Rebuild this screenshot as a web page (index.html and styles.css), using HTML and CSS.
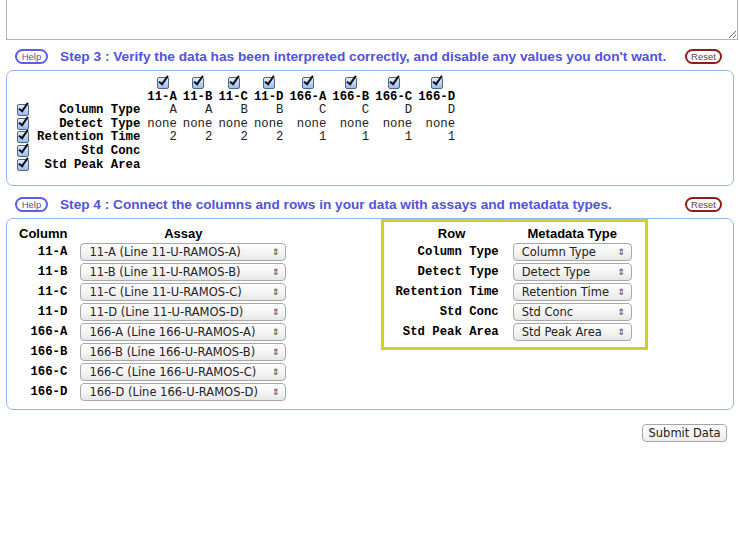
FILE: index.html
```
<!DOCTYPE html>
<html>
<head>
<meta charset="utf-8">
<link rel="stylesheet" href="styles.css">
</head>
<body>
<div class="page">
  <textarea class="paste"></textarea>

  <div class="stephead first">
    <span class="help">Help</span>
    <span class="title">Step 3 : Verify the data has been interpreted correctly, and disable any values you don't want.</span>
    <span class="reset">Reset</span>
  </div>
  <div class="panel p3">
    <table class="grid">
      <tr class="cbrow">
        <td></td><td></td>
        <td class="c"><span class="cb"></span></td>
        <td class="c"><span class="cb"></span></td>
        <td class="c"><span class="cb"></span></td>
        <td class="c"><span class="cb"></span></td>
        <td class="c"><span class="cb"></span></td>
        <td class="c"><span class="cb"></span></td>
        <td class="c"><span class="cb"></span></td>
        <td class="c"><span class="cb"></span></td>
      </tr>
      <tr class="hdr">
        <td></td><td></td>
        <th>11-A</th><th>11-B</th><th>11-C</th><th>11-D</th><th>166-A</th><th>166-B</th><th>166-C</th><th>166-D</th>
      </tr>
      <tr>
        <td class="rc"><span class="cb"></span></td><th class="lbl">Column Type</th>
        <td>A</td><td>A</td><td>B</td><td>B</td><td>C</td><td>C</td><td>D</td><td>D</td>
      </tr>
      <tr>
        <td class="rc"><span class="cb"></span></td><th class="lbl">Detect Type</th>
        <td>none</td><td>none</td><td>none</td><td>none</td><td>none</td><td>none</td><td>none</td><td>none</td>
      </tr>
      <tr>
        <td class="rc"><span class="cb"></span></td><th class="lbl">Retention Time</th>
        <td>2</td><td>2</td><td>2</td><td>2</td><td>1</td><td>1</td><td>1</td><td>1</td>
      </tr>
      <tr>
        <td class="rc"><span class="cb"></span></td><th class="lbl">Std Conc</th>
        <td></td><td></td><td></td><td></td><td></td><td></td><td></td><td></td>
      </tr>
      <tr>
        <td class="rc"><span class="cb"></span></td><th class="lbl">Std Peak Area</th>
        <td></td><td></td><td></td><td></td><td></td><td></td><td></td><td></td>
      </tr>
    </table>
  </div>

  <div class="stephead second">
    <span class="help">Help</span>
    <span class="title t4">Step 4 : Connect the columns and rows in your data with assays and metadata types.</span>
    <span class="reset">Reset</span>
  </div>
  <div class="panel p4">
    <table class="map left">
      <tr><th class="colh">Column</th><th class="ch">Assay</th></tr>
      <tr><td class="lbl">11-A</td><td class="sc"><div class="sel w1"><span>11-A (Line 11-U-RAMOS-A)</span><span class="arr">&#8661;</span></div></td></tr>
      <tr><td class="lbl">11-B</td><td class="sc"><div class="sel w1"><span>11-B (Line 11-U-RAMOS-B)</span><span class="arr">&#8661;</span></div></td></tr>
      <tr><td class="lbl">11-C</td><td class="sc"><div class="sel w1"><span>11-C (Line 11-U-RAMOS-C)</span><span class="arr">&#8661;</span></div></td></tr>
      <tr><td class="lbl">11-D</td><td class="sc"><div class="sel w1"><span>11-D (Line 11-U-RAMOS-D)</span><span class="arr">&#8661;</span></div></td></tr>
      <tr><td class="lbl">166-A</td><td class="sc"><div class="sel w1"><span>166-A (Line 166-U-RAMOS-A)</span><span class="arr">&#8661;</span></div></td></tr>
      <tr><td class="lbl">166-B</td><td class="sc"><div class="sel w1"><span>166-B (Line 166-U-RAMOS-B)</span><span class="arr">&#8661;</span></div></td></tr>
      <tr><td class="lbl">166-C</td><td class="sc"><div class="sel w1"><span>166-C (Line 166-U-RAMOS-C)</span><span class="arr">&#8661;</span></div></td></tr>
      <tr><td class="lbl">166-D</td><td class="sc"><div class="sel w1"><span>166-D (Line 166-U-RAMOS-D)</span><span class="arr">&#8661;</span></div></td></tr>
    </table>
    <div class="hilite">
      <table class="map right">
        <tr><th class="ch rowh">Row</th><th class="ch">Metadata Type</th></tr>
        <tr><td class="lbl">Column Type</td><td><div class="sel w2"><span>Column Type</span><span class="arr">&#8661;</span></div></td></tr>
        <tr><td class="lbl">Detect Type</td><td><div class="sel w2"><span>Detect Type</span><span class="arr">&#8661;</span></div></td></tr>
        <tr><td class="lbl">Retention Time</td><td><div class="sel w2"><span>Retention Time</span><span class="arr">&#8661;</span></div></td></tr>
        <tr><td class="lbl">Std Conc</td><td><div class="sel w2"><span>Std Conc</span><span class="arr">&#8661;</span></div></td></tr>
        <tr><td class="lbl">Std Peak Area</td><td><div class="sel w2"><span>Std Peak Area</span><span class="arr">&#8661;</span></div></td></tr>
      </table>
    </div>
  </div>

  <div class="submitrow">
    <button class="submit">Submit Data</button>
  </div>
</div>
</body>
</html>
```
FILE: styles.css
```
html, body {
  margin: 0;
  padding: 0;
  background: #ffffff;
}
body {
  font-family: "Liberation Sans", Arial, sans-serif;
  color: #000;
}
.page {
  padding: 0 6px;
  width: 728px;
}
.paste {
  display: block;
  box-sizing: border-box;
  width: 732px;
  height: 60px;
  margin: -20px 0 0 0;
  border: 1px solid #b4b4b4;
  background: #fff;
  resize: both;
}
.stephead {
  display: flex;
  align-items: center;
  height: 16px;
  padding: 0 12px 0 9px;
}
.stephead.first { margin-top: 8px; }
.stephead.second { margin-top: 10px; }
.help {
  box-sizing: border-box;
  width: 33px;
  height: 15px;
  border: 2px solid #5c5cf0;
  border-radius: 8px;
  font-size: 9.5px;
  line-height: 11px;
  text-align: center;
  color: #55558f;
}
.title {
  flex: 1;
  margin-left: 12px;
  font-weight: bold;
  font-size: 13.7px;
  color: #5252e0;
  white-space: nowrap;
}
.title.t4 { font-size: 13.65px; }
.reset {
  box-sizing: border-box;
  width: 37px;
  height: 15px;
  border: 2px solid #8e1e1e;
  border-radius: 8px;
  font-size: 9.5px;
  line-height: 11px;
  text-align: center;
  color: #663c3c;
}
.panel {
  margin-top: 6px;
  border: 1px solid #8fb6f0;
  border-radius: 7px;
}
.p3 {
  height: 109px;
  padding: 5px 0 0 8px;
  box-sizing: content-box;
}
.grid {
  border-collapse: collapse;
  font-family: "Liberation Mono", "Courier New", monospace;
  font-size: 12.3px;
}
.grid td, .grid th {
  padding: 0 3px;
  height: 13.4px;
  line-height: 13.4px;
  text-align: right;
  white-space: nowrap;
}
.grid .cbrow td { height: 14px; line-height: 14px; }
.grid .hdr th { height: 14px; line-height: 14px; }
.grid th { font-weight: bold; }
.grid td { font-weight: normal; color: #222; }
.grid td.c { text-align: center; padding-left: 4px; }
.grid td.rc { padding: 0 4px 0 2px; text-align: left; }
.grid th.lbl { padding-left: 4px; padding-right: 4px; }
.cb {
  display: inline-block;
  position: relative;
  box-sizing: border-box;
  width: 12px;
  height: 12px;
  border: 1px solid #4d6792;
  border-radius: 2px;
  background: linear-gradient(#e2ecfd, #9bbbf0);
  vertical-align: middle;
}
.cb::after {
  content: "";
  position: absolute;
  left: 3px;
  top: -4px;
  width: 3px;
  height: 9px;
  border: solid #111;
  border-width: 0 2px 2px 0;
  transform: rotate(35deg);
}
.p4 {
  display: flex;
  align-items: flex-start;
  padding: 0 0 7px 10px;
}
.map {
  border-collapse: collapse;
}
.map th {
  font-weight: bold;
  font-size: 13px;
  height: 16px;
  line-height: 16px;
  padding: 0 2px;
}
.map td {
  height: 20px;
  padding: 0 2px;
  white-space: nowrap;
}
.map .colh { text-align: left; padding-left: 2px; }
.map .ch { text-align: center; }
.map td.lbl {
  font-family: "Liberation Mono", "Courier New", monospace;
  font-weight: bold;
  font-size: 12.3px;
  text-align: right;
}
.left { margin-top: 7px; }
.left td.lbl { padding-right: 2px; }
.left td.sc { padding-left: 11px; }
.left th.ch { padding-left: 11px; }
.sel {
  display: flex;
  align-items: center;
  justify-content: space-between;
  box-sizing: border-box;
  height: 18px;
  border: 1px solid #a9a9a9;
  border-radius: 4px;
  background: linear-gradient(#ffffff, #f2f2f2 60%, #e6e6e6);
  font-family: "DejaVu Sans", "Lucida Grande", sans-serif;
  font-size: 11.5px;
  color: #222;
  padding: 0 6px 0 8px;
}
.sel .arr {
  font-size: 9px;
  color: #444;
}
.w1 { width: 206px; }
.w2 { width: 119px; }
.hilite {
  margin-left: 93px;
  border: 3px solid #d0d025;
  padding: 4px 11px 5px 8px;
}
.right td.lbl { padding-right: 12px; padding-left: 3px; }
.rowh { padding-left: 10px; }
.submitrow {
  display: flex;
  justify-content: flex-end;
  margin-top: 14px;
  padding-right: 7px;
}
.submit {
  box-sizing: border-box;
  height: 18px;
  width: 85px;
  padding: 0;
  border: 1px solid #a5a5a5;
  border-radius: 4px;
  background: linear-gradient(#ffffff, #ececec);
  font-family: "DejaVu Sans", "Lucida Grande", sans-serif;
  font-size: 11.5px;
  color: #222;
}
```
